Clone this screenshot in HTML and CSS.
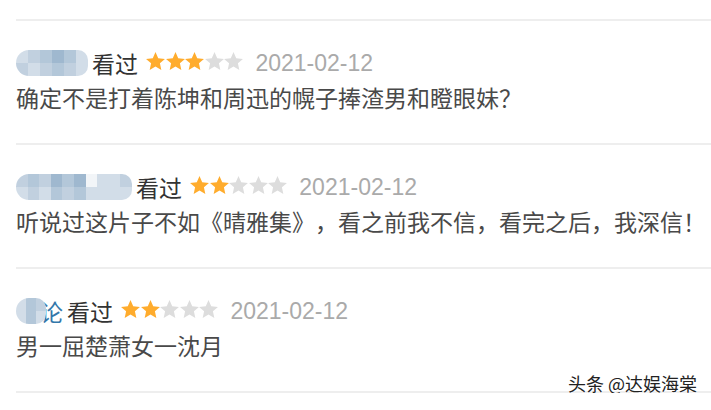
FILE: index.html
```html
<!DOCTYPE html>
<html lang="zh-CN">
<head>
  <meta charset="UTF-8">
  <title>短评</title>
  <link rel="stylesheet" href="styles.css">
</head>
<body>

  <svg width="0" height="0" class="defs">
    <defs>
      <path id="star" d="M12 1.2L15.17 8.43 23.03 9.22 17.14 14.47 18.82 22.18 12 18.2 5.18 22.18 6.86 14.47 0.97 9.22 8.83 8.43z"/>
    </defs>
  </svg>

  <div class="comments">

    <div class="comment">
      <div class="comment-info">
        <span class="user">
          <span class="blur">
            <i class="b1"></i><i class="b2"></i>
            <i class="b2"></i><i class="b1"></i>
            <i class="b3"></i><i class="b2"></i>
            <i class="b4"></i><i class="b3"></i>
            <i class="b3"></i><i class="b2"></i>
            <i class="b1"></i><i class="b1"></i>
          </span>
        </span>
        <span class="status">看过</span>
        <span class="rating">
          <svg class="star on" viewBox="0.9 1.2 22.2 21"><use href="#star"/></svg>
          <svg class="star on" viewBox="0.9 1.2 22.2 21"><use href="#star"/></svg>
          <svg class="star on" viewBox="0.9 1.2 22.2 21"><use href="#star"/></svg>
          <svg class="star" viewBox="0.9 1.2 22.2 21"><use href="#star"/></svg>
          <svg class="star" viewBox="0.9 1.2 22.2 21"><use href="#star"/></svg>
        </span>
        <span class="time">2021-02-12</span>
      </div>
      <p class="comment-text">确定不是打着陈坤和周迅的幌子捧渣男和瞪眼妹？</p>
    </div>

    <div class="comment">
      <div class="comment-info">
        <span class="user">
          <span class="blur wide">
            <i class="b2"></i><i class="b1"></i>
            <i class="b3"></i><i class="b2"></i>
            <i class="b2"></i><i class="b1"></i>
            <i class="b4"></i><i class="b3"></i>
            <i class="b3"></i><i class="b2"></i>
            <i class="b4"></i><i class="b3"></i>
            <i class="b0"></i><i class="b1"></i>
            <i class="b1"></i><i class="b1"></i>
            <i class="b1"></i><i class="b1"></i>
            <i class="b2"></i><i class="b1"></i>
          </span>
        </span>
        <span class="status">看过</span>
        <span class="rating">
          <svg class="star on" viewBox="0.9 1.2 22.2 21"><use href="#star"/></svg>
          <svg class="star on" viewBox="0.9 1.2 22.2 21"><use href="#star"/></svg>
          <svg class="star" viewBox="0.9 1.2 22.2 21"><use href="#star"/></svg>
          <svg class="star" viewBox="0.9 1.2 22.2 21"><use href="#star"/></svg>
          <svg class="star" viewBox="0.9 1.2 22.2 21"><use href="#star"/></svg>
        </span>
        <span class="time">2021-02-12</span>
      </div>
      <p class="comment-text">听说过这片子不如《晴雅集》，看之前我不信，看完之后，我深信！</p>
    </div>

    <div class="comment">
      <div class="comment-info">
        <span class="user">
          <span class="blur short">
            <i class="b1"></i><i class="b1"></i>
            <i class="b3"></i><i class="b3"></i>
            <i class="b2"></i><i class="b1"></i>
          </span><span class="name-tail">论</span>
        </span>
        <span class="status">看过</span>
        <span class="rating">
          <svg class="star on" viewBox="0.9 1.2 22.2 21"><use href="#star"/></svg>
          <svg class="star on" viewBox="0.9 1.2 22.2 21"><use href="#star"/></svg>
          <svg class="star" viewBox="0.9 1.2 22.2 21"><use href="#star"/></svg>
          <svg class="star" viewBox="0.9 1.2 22.2 21"><use href="#star"/></svg>
          <svg class="star" viewBox="0.9 1.2 22.2 21"><use href="#star"/></svg>
        </span>
        <span class="time">2021-02-12</span>
      </div>
      <p class="comment-text">男一屈楚萧女一沈月</p>
    </div>

  </div>

  <div class="watermark">头条 @达娱海棠</div>

</body>
</html>
```

FILE: styles.css
```css
body {
  margin: 0;
  padding-top: 19px;
  background: #fff;
  font-family: "Liberation Sans", "Noto Sans CJK SC", sans-serif;
  color: #494949;
  text-spacing-trim: space-all;
  position: relative;
}
.defs {
  position: absolute;
}
.comments {
  margin-left: 16px;
  border-bottom: 2px solid #eeeeee;
}
.comment {
  border-top: 2px solid #eeeeee;
  padding: 24px 0 26px;
}
.comment-info {
  display: flex;
  align-items: center;
  height: 36px;
  font-size: 23px;
}
.user {
  display: flex;
  align-items: center;
  color: #3377aa;
}
.blur {
  display: grid;
  grid-auto-flow: column;
  grid-template-rows: 13px 13px;
  grid-auto-columns: 12px;
  border-radius: 13px 10px 10px 13px;
  overflow: hidden;
  filter: blur(0.7px);
  position: relative;
  z-index: 1;
}
.blur.wide {
  grid-auto-columns: 11.6px;
}
.blur.short {
  grid-auto-columns: 10px;
  margin-right: -6px;
}
.b0 { background: #f2f5f8; }
.b1 { background: #d2dde8; }
.b2 { background: #c1d0df; }
.b3 { background: #b3c7d9; }
.b4 { background: #9fb8cf; }
.status {
  margin-left: 4px;
  color: #333;
}
.rating {
  display: flex;
  gap: 0.6px;
  margin-left: 8px;
  margin-top: -4px;
}
.star {
  flex: none;
  width: 19px;
  height: 18px;
  fill: #dddddd;
}
.star.on {
  fill: #ffac2d;
}
.time {
  margin-left: 12px;
  color: #aaaaaa;
}
.comment-text {
  margin: 0;
  font-size: 23px;
  line-height: 36px;
}
.watermark {
  position: absolute;
  left: 568px;
  top: 371px;
  font-family: "Noto Sans CJK SC", sans-serif;
  font-size: 18px;
  line-height: 24px;
  color: #222;
  text-shadow: 0 0 2px #fff, 0 0 2px #fff;
}
```
